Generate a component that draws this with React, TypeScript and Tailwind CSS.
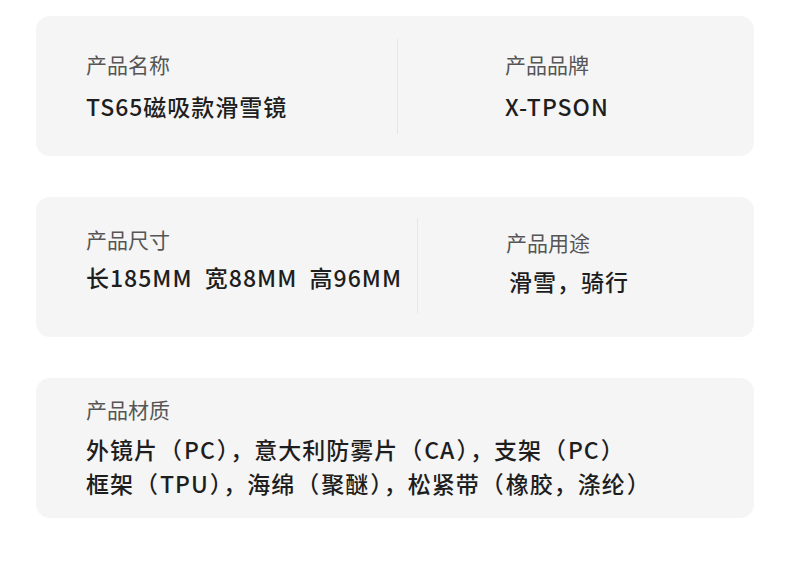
const FONT = "font-['Noto_Sans_CJK_SC','Noto_Sans',sans-serif]"

function Label({ children }: { children: React.ReactNode }) {
  return <div className="text-[21px] leading-[28px] text-[#555]">{children}</div>
}

function Value({ children, className = '' }: { children: React.ReactNode; className?: string }) {
  return (
    <div className={`text-[23px] leading-[30px] font-medium tracking-[1px] text-[#1e1e1e] ${className}`}>
      {children}
    </div>
  )
}

// full-width brackets sit a little looser in the design
function Spaced({ text }: { text: string }) {
  return (
    <div>
      {text.split(/([（）])/).map((part, i) =>
        part === '（' || part === '）' ? (
          <span key={i} className="mx-[1px]">{part}</span>
        ) : (
          part
        )
      )}
    </div>
  )
}

export default function App() {
  return (
    <div className={`w-[790px] h-[574px] bg-white pt-[16px] px-[36px] flex flex-col gap-[41px] ${FONT}`}>
      {/* name / brand */}
      <div className="h-[140px] rounded-[14px] bg-[#f5f5f5] flex items-center">
        <div className="w-[362px] h-[95px] flex flex-col pl-[50px] pt-[11px] gap-[13px] border-r border-[#e6e6e6]">
          <Label>产品名称</Label>
          <Value>TS65磁吸款滑雪镜</Value>
        </div>
        <div className="flex flex-col pl-[107px] gap-[13px] pb-[2px]">
          <Label>产品品牌</Label>
          <Value>X-TPSON</Value>
        </div>
      </div>

      {/* size / usage */}
      <div className="h-[140px] rounded-[14px] bg-[#f5f5f5] flex items-start pt-[21px]">
        <div className="w-[382px] h-[95px] flex flex-col pl-[50px] pt-[7px] gap-[9px] border-r border-[#e6e6e6]">
          <Label>产品尺寸</Label>
          <Value className="whitespace-pre">长185MM  宽88MM  高96MM</Value>
        </div>
        <div className="flex flex-col pl-[88px] pt-[10px] gap-[10px]">
          <Label>产品用途</Label>
          <Value className="pl-[3px]">滑雪，骑行</Value>
        </div>
      </div>

      {/* material */}
      <div className="h-[140px] rounded-[14px] bg-[#f5f5f5] flex flex-col pl-[50px] pt-[17px]">
        <Label>产品材质</Label>
        <div className="mt-[9px] text-[23px] leading-[34px] font-medium tracking-[1px] text-[#1e1e1e]">
          <Spaced text="外镜片（PC），意大利防雾片（CA），支架（PC）" />
          <Spaced text="框架（TPU），海绵（聚醚），松紧带（橡胶，涤纶）" />
        </div>
      </div>
    </div>
  )
}
